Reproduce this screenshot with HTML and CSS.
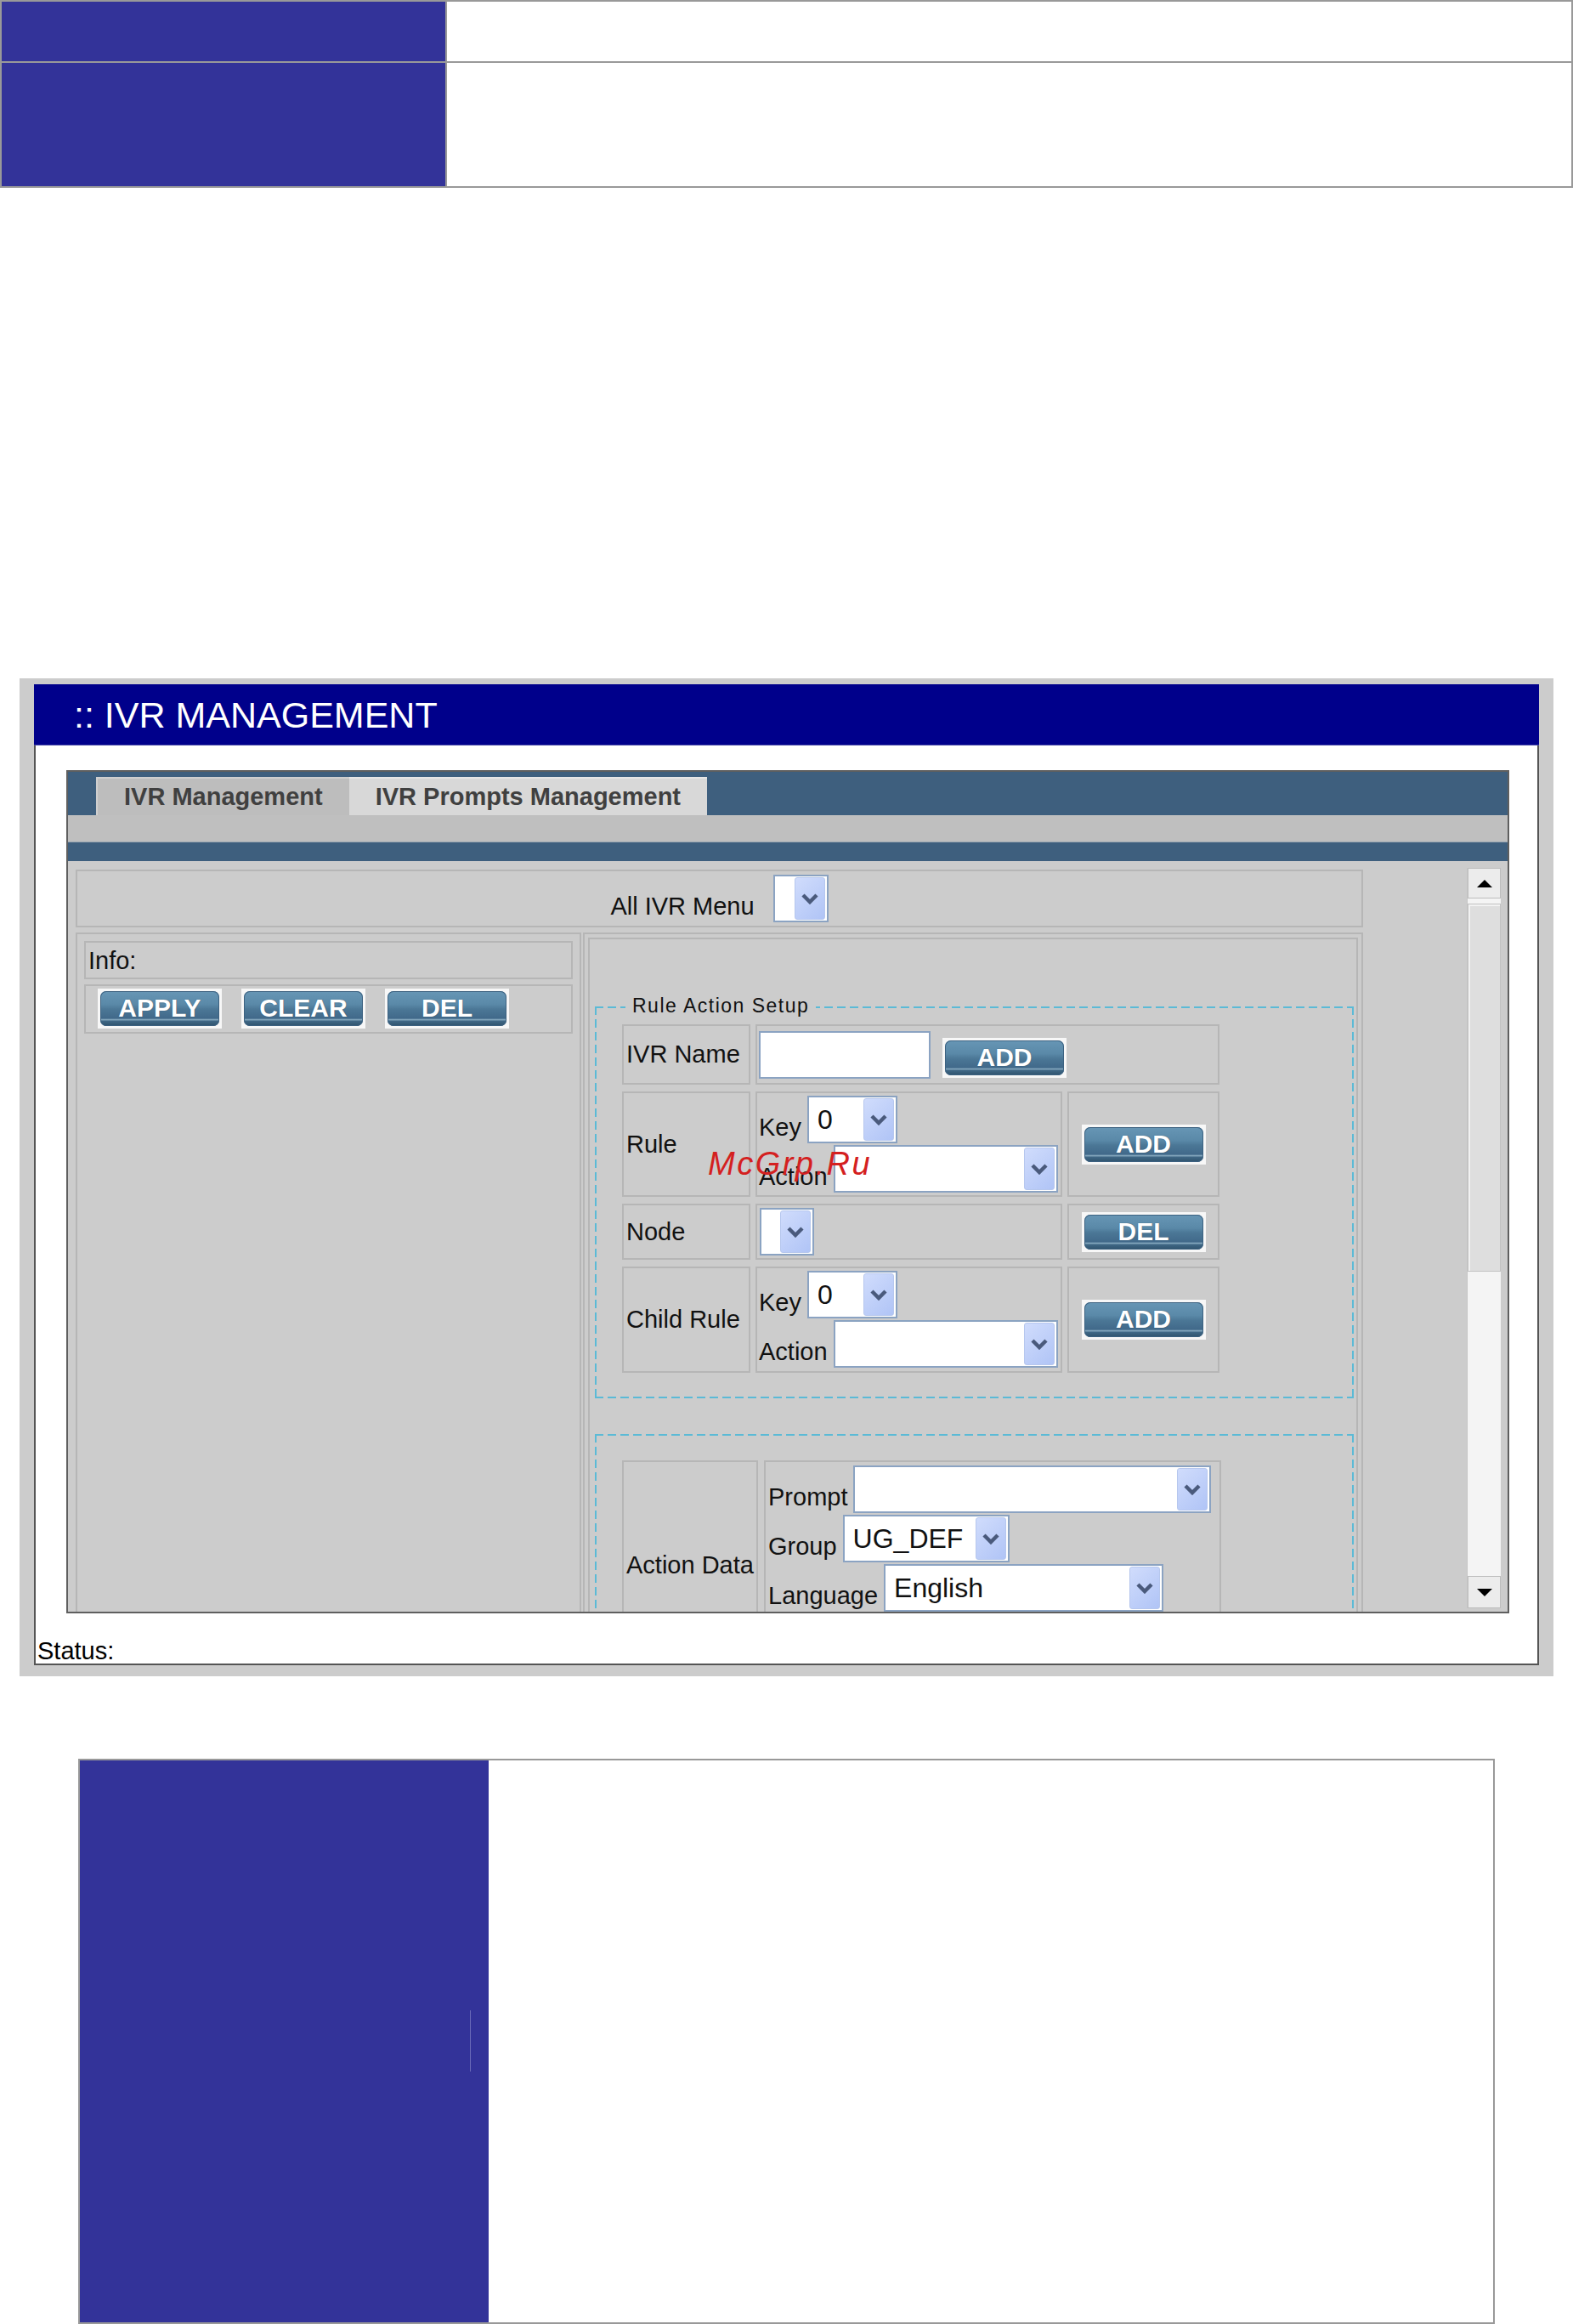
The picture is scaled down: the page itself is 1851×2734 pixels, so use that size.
FILE: index.html
```html
<!DOCTYPE html>
<html lang="en">
<head>
  <meta charset="UTF-8" />
  <meta name="viewport" content="width=device-width, initial-scale=1.0" />
  <title>IVR Management</title>
  <link rel="stylesheet" href="styles.css">
</head>
<body>
  <div class="spec spec-top">
    <div class="spec-key"></div>
    <div class="spec-val"></div>
    <div class="spec-key"></div>
    <div class="spec-val"></div>
  </div>

  <div class="shot">
    <div class="title-bar">:: IVR MANAGEMENT</div>
    <div class="shot-body">
      <div class="app">
        <div class="tab-bar">
          <div class="tab tab-on">IVR Management</div>
          <div class="tab">IVR Prompts Management</div>
        </div>
        <div class="sub-band"></div>
        <div class="slate-band"></div>

        <div class="viewport">
          <div class="scroll-content">
            <div class="cell menu-row">
              <span class="menu-lbl">All IVR Menu</span>
              <span class="select sel-menu"><span class="sel-val"></span><span class="drop"><svg width="22" height="14" viewBox="0 0 22 14"><path d="M3 3l8 8 8-8" fill="none" stroke="#4a5a7c" stroke-width="4.5"/></svg></span></span>
            </div>

            <div class="main-row">
              <div class="cell left-col">
                <div class="cell info-box">Info:</div>
                <div class="cell btn-box">
                  <span class="btn-wrap"><span class="btn">APPLY</span></span>
                  <span class="btn-wrap"><span class="btn">CLEAR</span></span>
                  <span class="btn-wrap"><span class="btn">DEL</span></span>
                </div>
              </div>

              <div class="cell right-col">
                <div class="cell inner-box">
                  <div class="dash-box rule-set">
                    <div class="legend">Rule Action Setup</div>
                    <div class="rule-grid">
                      <div class="cell rlabel">IVR Name</div>
                      <div class="cell name-val">
                        <input class="text-in" type="text" />
                        <span class="btn-wrap"><span class="btn">ADD</span></span>
                      </div>

                      <div class="cell rlabel">Rule</div>
                      <div class="cell kv">
                        <div class="kv-line">
                          <span class="fld-lbl">Key</span>
                          <span class="select sel-key"><span class="sel-val">0</span><span class="drop"><svg width="22" height="14" viewBox="0 0 22 14"><path d="M3 3l8 8 8-8" fill="none" stroke="#4a5a7c" stroke-width="4.5"/></svg></span></span>
                        </div>
                        <div class="kv-line">
                          <span class="fld-lbl">Action</span>
                          <span class="select sel-action"><span class="sel-val"></span><span class="drop"><svg width="22" height="14" viewBox="0 0 22 14"><path d="M3 3l8 8 8-8" fill="none" stroke="#4a5a7c" stroke-width="4.5"/></svg></span></span>
                        </div>
                      </div>
                      <div class="cell act"><span class="btn-wrap"><span class="btn">ADD</span></span></div>

                      <div class="cell rlabel">Node</div>
                      <div class="cell node-val">
                        <span class="select sel-node"><span class="sel-val"></span><span class="drop"><svg width="22" height="14" viewBox="0 0 22 14"><path d="M3 3l8 8 8-8" fill="none" stroke="#4a5a7c" stroke-width="4.5"/></svg></span></span>
                      </div>
                      <div class="cell act"><span class="btn-wrap"><span class="btn">DEL</span></span></div>

                      <div class="cell rlabel">Child Rule</div>
                      <div class="cell kv">
                        <div class="kv-line">
                          <span class="fld-lbl">Key</span>
                          <span class="select sel-key"><span class="sel-val">0</span><span class="drop"><svg width="22" height="14" viewBox="0 0 22 14"><path d="M3 3l8 8 8-8" fill="none" stroke="#4a5a7c" stroke-width="4.5"/></svg></span></span>
                        </div>
                        <div class="kv-line">
                          <span class="fld-lbl">Action</span>
                          <span class="select sel-action"><span class="sel-val"></span><span class="drop"><svg width="22" height="14" viewBox="0 0 22 14"><path d="M3 3l8 8 8-8" fill="none" stroke="#4a5a7c" stroke-width="4.5"/></svg></span></span>
                        </div>
                      </div>
                      <div class="cell act"><span class="btn-wrap"><span class="btn">ADD</span></span></div>
                    </div>
                  </div>

                  <div class="dash-box data-set">
                    <div class="data-grid">
                      <div class="cell rlabel">Action Data</div>
                      <div class="cell data-val">
                        <div class="kv-line">
                          <span class="fld-lbl">Prompt</span>
                          <span class="select sel-prompt"><span class="sel-val"></span><span class="drop"><svg width="22" height="14" viewBox="0 0 22 14"><path d="M3 3l8 8 8-8" fill="none" stroke="#4a5a7c" stroke-width="4.5"/></svg></span></span>
                        </div>
                        <div class="kv-line">
                          <span class="fld-lbl">Group</span>
                          <span class="select sel-group"><span class="sel-val">UG_DEF</span><span class="drop"><svg width="22" height="14" viewBox="0 0 22 14"><path d="M3 3l8 8 8-8" fill="none" stroke="#4a5a7c" stroke-width="4.5"/></svg></span></span>
                        </div>
                        <div class="kv-line">
                          <span class="fld-lbl">Language</span>
                          <span class="select sel-lang"><span class="sel-val">English</span><span class="drop"><svg width="22" height="14" viewBox="0 0 22 14"><path d="M3 3l8 8 8-8" fill="none" stroke="#4a5a7c" stroke-width="4.5"/></svg></span></span>
                        </div>
                      </div>
                    </div>
                  </div>
                </div>
              </div>
            </div>
          </div>

          <div class="scrollbar">
            <div class="sb-btn"><span class="tri-up"></span></div>
            <div class="sb-thumb"></div>
            <div class="sb-track"></div>
            <div class="sb-btn sb-down"><span class="tri-down"></span></div>
          </div>
        </div>
      </div>
      <div class="status">Status:</div>
    </div>
    <div class="watermark">McGrp.Ru</div>
  </div>

  <div class="spec spec-bottom">
    <div class="spec-key"><div class="scan-line"></div></div>
    <div class="spec-val"></div>
  </div>
</body>
</html>
```

FILE: styles.css
```css
body {
  margin: 0;
  padding: 0;
  background: #fff;
  color: #111;
  font-family: 'Liberation Sans', Arial, sans-serif;
  font-size: 29px;
}

/* spec tables above and below the screenshot */
.spec {
  display: grid;
  border: 2px solid #999;
  background: #999;
}

.spec-top {
  grid-template-columns: 522px 1fr;
  grid-template-rows: 70px 145px;
  gap: 2px;
}

.spec-bottom {
  margin: 97px 0 0 92px;
  width: 1667px;
  height: 665px;
  box-sizing: border-box;
  grid-template-columns: 481px 1fr;
}

.spec-key {
  background: #333399;
}

.spec-val {
  background: #fff;
}

.scan-line {
  width: 1px;
  height: 72px;
  margin: 294px 0 0 459px;
  background: #6a6ab8;
}

/* screenshot frame */
.shot {
  position: relative;
  margin: 577px 0 0 23px;
  width: 1805px;
  box-sizing: border-box;
  padding: 7px 17px 13px;
  background: #ccc;
}

.watermark {
  position: absolute;
  left: 810px;
  top: 552px;
  color: #d42020;
  font-size: 38px;
  line-height: 38px;
  font-style: italic;
  letter-spacing: 2.5px;
}

.title-bar {
  height: 72px;
  line-height: 72px;
  padding-left: 47px;
  background: #00008b;
  border-bottom: 1px solid #4a4aa8;
  box-sizing: border-box;
  color: #fff;
  font-size: 43px;
}

.shot-body {
  background: #fff;
  border: 2px solid #555;
  border-top: 0;
  padding: 29px 33px 0 2px;
}

.status {
  margin-top: 29px;
  height: 30px;
  line-height: 30px;
  color: #000;
}

.app {
  height: 992px;
  margin-left: 34px;
  box-sizing: border-box;
  border: 2px solid #5f5f5f;
  display: flex;
  flex-direction: column;
}

.tab-bar {
  height: 51px;
  flex-shrink: 0;
  background: #3e5f7e;
  display: flex;
  align-items: flex-end;
  padding-left: 33px;
}

.tab {
  height: 45px;
  box-sizing: border-box;
  line-height: 43px;
  padding: 0 31px;
  background: #d8d8d8;
  border-top: 2px solid #e6e6e6;
  color: #404040;
  font-weight: bold;
}

.tab-on {
  background: #bdbdbd;
  border-top-color: #cfcfcf;
  border-left: 2px solid #cfcfcf;
}

.sub-band {
  height: 32px;
  flex-shrink: 0;
  box-sizing: border-box;
  background: #bfbfbf;
  border-bottom: 1px solid #9aa6b2;
}

.slate-band {
  height: 22px;
  flex-shrink: 0;
  background: #3e5f7e;
}

.viewport {
  flex: 1;
  display: flex;
  overflow: hidden;
  background: #ccc;
}

.scroll-content {
  flex: 1;
  min-width: 0;
  overflow: hidden;
  padding: 10px 0 0 9px;
}

/* fake scrollbar */
.scrollbar {
  width: 40px;
  flex-shrink: 0;
  margin: 8px 8px 4px 0;
  display: flex;
  flex-direction: column;
  background: #f4f4f4;
  border-left: 1px solid #c4c4c4;
  box-sizing: border-box;
}

.sb-btn {
  height: 36px;
  box-sizing: border-box;
  background: #ececec;
  border: 1px solid #bdbdbd;
  display: flex;
  align-items: center;
  justify-content: center;
}

.sb-down {
  height: 38px;
}

.tri-up, .tri-down {
  width: 0;
  height: 0;
  border-left: 9px solid transparent;
  border-right: 9px solid transparent;
}

.tri-up {
  border-bottom: 9px solid #000;
}

.tri-down {
  border-top: 9px solid #000;
}

.sb-thumb {
  margin-top: 6px;
  height: 433px;
  box-sizing: border-box;
  background: #dedede;
  border: 1px solid #c2c2c2;
  box-shadow: inset 2px 2px #f2f2f2;
}

.sb-track {
  flex: 1;
}

/* form table */
.cell {
  box-sizing: border-box;
  border: 2px solid #b6b6b6;
}

.menu-row {
  width: 1515px;
  height: 68px;
  display: flex;
  align-items: center;
  justify-content: center;
}

.menu-lbl {
  line-height: 33px;
  margin: 18px 22px 0 0;
}

.main-row {
  display: flex;
  gap: 2px;
  width: 1515px;
  margin-top: 6px;
}

.left-col {
  width: 595px;
  flex-shrink: 0;
  padding: 8px;
}

.info-box {
  height: 45px;
  padding: 5px 3px 0;
  line-height: 33px;
}

.btn-box {
  height: 58px;
  margin-top: 6px;
  padding: 3px 0 0 14px;
  display: flex;
  gap: 23px;
  align-items: flex-start;
}

.btn-wrap {
  display: inline-flex;
  padding: 3px;
  background: #f7f7f7;
}

.btn {
  width: 140px;
  height: 41px;
  border-radius: 7px;
  background: linear-gradient(#6796b5 0%, #5a89a8 38%, #4b7796 52%, #41698a 78%, #86a9bf 82%, #3f6785 86%, #2f526c 100%);
  box-shadow: inset 0 0 0 1px #3c6180;
  color: #fff;
  font-family: 'Liberation Sans Narrow', 'Liberation Sans', Arial, sans-serif;
  font-weight: bold;
  font-size: 30px;
  line-height: 40px;
  text-align: center;
  text-shadow: 0 0 1px #2a4a62;
}

.right-col {
  flex: 1;
  padding: 4px;
}

.inner-box {
  padding: 79px 3px 0 6px;
}

.dash-box {
  display: flow-root;
  background:
    repeating-linear-gradient(90deg, #5bbad6 0 10px, transparent 10px 15px) top / 100% 2px no-repeat,
    repeating-linear-gradient(90deg, #5bbad6 0 10px, transparent 10px 15px) bottom / 100% 2px no-repeat,
    repeating-linear-gradient(180deg, #5bbad6 0 10px, transparent 10px 15px) left / 2px 100% no-repeat,
    repeating-linear-gradient(180deg, #5bbad6 0 10px, transparent 10px 15px) right / 2px 100% no-repeat;
}

.rule-set {
  padding: 0 0 30px 32px;
}

.legend {
  width: fit-content;
  margin: -14px 0 0 4px;
  padding: 0 8px;
  height: 26px;
  line-height: 26px;
  background: #ccc;
  font-size: 23px;
  letter-spacing: 1.5px;
}

.rule-grid {
  margin-top: 9px;
  display: grid;
  grid-template-columns: 151px 361px 179px;
  grid-template-rows: 71px 124px 66px 125px;
  gap: 8px 6px;
}

.rlabel {
  display: flex;
  align-items: center;
  padding-left: 3px;
  line-height: 33px;
  white-space: nowrap;
}

.name-val {
  grid-column: span 2;
  display: flex;
  align-items: flex-end;
  gap: 14px;
  padding: 0 0 5px 2px;
}

.text-in {
  width: 202px;
  height: 56px;
  box-sizing: border-box;
  margin: 0;
  border: 2px solid #8ba3c2;
  background: #fff;
  outline: none;
}

.name-val .btn-wrap {
  margin-bottom: 1px;
}

.kv {
  display: flex;
  flex-direction: column;
  gap: 2px;
  padding: 3px 0 0 2px;
}

.kv-line {
  display: flex;
  align-items: flex-end;
  gap: 7px;
}

.fld-lbl {
  line-height: 33px;
  padding-bottom: 2px;
}

.node-val {
  display: flex;
  align-items: center;
  padding-left: 3px;
}

.act {
  display: flex;
  align-items: center;
  justify-content: center;
}

.data-set {
  margin-top: 42px;
  padding: 31px 0 0 32px;
}

.data-grid {
  display: grid;
  grid-template-columns: 160px 538px;
  grid-template-rows: 247px;
  gap: 7px;
}

.data-val {
  display: flex;
  flex-direction: column;
  gap: 2px;
  padding: 4px 0 0 3px;
}

/* dropdowns */
.select {
  display: inline-flex;
  align-items: center;
  height: 56px;
  box-sizing: border-box;
  border: 2px solid #8ba3c2;
  background: #fff;
  padding: 1px 2px 1px 10px;
  flex-shrink: 0;
}

.sel-val {
  flex: 1;
  font-size: 32px;
  line-height: 36px;
  color: #111;
  white-space: nowrap;
}

.drop {
  width: 36px;
  align-self: stretch;
  box-sizing: border-box;
  border: 1px solid #b6c7ee;
  border-radius: 3px;
  background: linear-gradient(135deg, #d0dcfc, #b0c4f6);
  display: flex;
  align-items: center;
  justify-content: center;
}

.sel-menu { width: 65px; }
.sel-key { width: 106px; }
.sel-action { width: 264px; }
.sel-node { width: 64px; }
.sel-prompt { width: 421px; }
.sel-group { width: 196px; }
.sel-lang { width: 329px; }
```
